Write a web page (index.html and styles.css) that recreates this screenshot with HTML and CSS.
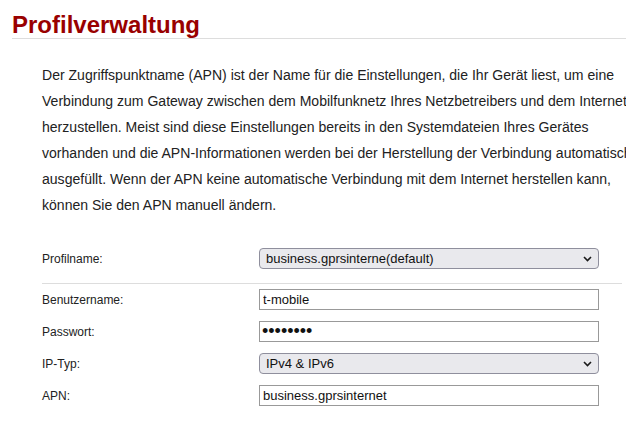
FILE: index.html
```html
<!DOCTYPE html>
<html lang="de">
<head>
<meta charset="utf-8">
<title>Profilverwaltung</title>
<link rel="stylesheet" href="styles.css">
</head>
<body>
<div class="page">
  <h1 class="title">Profilverwaltung</h1>
  <div class="content">
    <p class="intro">Der Zugriffspunktname (APN) ist der Name für die Einstellungen, die Ihr Gerät liest, um eine Verbindung zum Gateway zwischen dem Mobilfunknetz Ihres Netzbetreibers und dem Internet herzustellen. Meist sind diese Einstellungen bereits in den Systemdateien Ihres Gerätes vorhanden und die APN-Informationen werden bei der Herstellung der Verbindung automatisch ausgefüllt. Wenn der APN keine automatische Verbindung mit dem Internet herstellen kann, können Sie den APN manuell ändern.</p>
    <div class="form">
      <div class="row">
        <label class="label" for="profile">Profilname:</label>
        <div class="select-wrap">
          <select id="profile" class="select">
            <option>business.gprsinterne(default)</option>
          </select>
          <svg class="chev" width="9" height="6" viewBox="0 0 9 6"><path d="M1 1 L4.5 4.5 L8 1" fill="none" stroke="#1a1a1a" stroke-width="1.6"/></svg>
        </div>
      </div>
      <div class="sep"></div>
      <div class="fields">
        <div class="row">
          <label class="label" for="user">Benutzername:</label>
          <input id="user" class="input" type="text" value="t-mobile">
        </div>
        <div class="row">
          <label class="label" for="pass">Passwort:</label>
          <input id="pass" class="input pw" type="password" value="12345678">
        </div>
        <div class="row">
          <label class="label" for="iptype">IP-Typ:</label>
          <div class="select-wrap">
            <select id="iptype" class="select">
              <option>IPv4 &amp; IPv6</option>
            </select>
            <svg class="chev" width="9" height="6" viewBox="0 0 9 6"><path d="M1 1 L4.5 4.5 L8 1" fill="none" stroke="#1a1a1a" stroke-width="1.6"/></svg>
          </div>
        </div>
        <div class="row">
          <label class="label" for="apn">APN:</label>
          <input id="apn" class="input" type="text" value="business.gprsinternet">
        </div>
      </div>
    </div>
  </div>
</div>
</body>
</html>
```

FILE: styles.css
```css
html, body {
  margin: 0;
  padding: 0;
  overflow: hidden;
  background: #ffffff;
}
body {
  font-family: "Liberation Sans", Arial, sans-serif;
  color: #222222;
}
.page {
  padding-left: 12px;
}
.title {
  margin: 12px 0 0 0;
  font-size: 24px;
  line-height: 26px;
  font-weight: bold;
  color: #990000;
  border-bottom: 1px solid #dddddd;
}
.content {
  padding-left: 30px;
}
.intro {
  width: 610px;
  margin: 23px 0 0 0;
  font-size: 14.05px;
  line-height: 26px;
  color: #222222;
}
.form {
  width: 580px;
  margin-top: 30px;
}
.row {
  display: flex;
  align-items: center;
  height: 21px;
}
.label {
  width: 217px;
  flex: none;
  font-size: 12px;
  color: #222222;
}
.select-wrap {
  position: relative;
  width: 340px;
  height: 21px;
}
.select {
  appearance: none;
  -webkit-appearance: none;
  box-sizing: border-box;
  width: 340px;
  height: 21px;
  margin: 0;
  padding: 0 20px 0 6px;
  font-family: "Liberation Sans", Arial, sans-serif;
  font-size: 13px;
  color: #111111;
  background: #e9e9ed;
  border: 1px solid #8f8f9d;
  border-radius: 4px;
  outline: none;
}
.chev {
  position: absolute;
  right: 7px;
  top: 8px;
  pointer-events: none;
}
.sep {
  height: 1px;
  background: #dddddd;
  margin: 14px 0 5px 0;
}
.fields {
  display: flex;
  flex-direction: column;
  gap: 11px;
}
.input {
  box-sizing: border-box;
  width: 340px;
  height: 21px;
  margin: 0;
  padding: 0 3px;
  font-family: "Liberation Sans", Arial, sans-serif;
  font-size: 13px;
  color: #111111;
  background: #ffffff;
  border: 1px solid #999999;
  border-radius: 0;
  outline: none;
}
.pw {
  font-size: 18px;
  padding: 0 2px;
}
```
